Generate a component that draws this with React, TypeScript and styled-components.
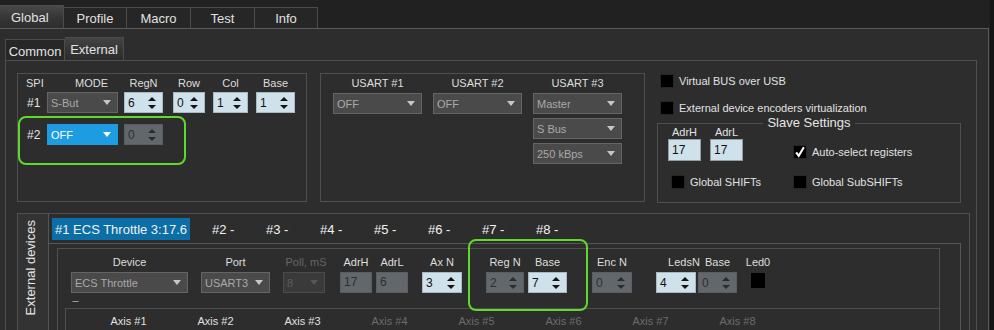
import React from "react";
import styled, { createGlobalStyle, css } from "styled-components";

const GlobalStyle = createGlobalStyle`
  html, body {
    margin: 0;
    padding: 0;
    background: #161616;
  }
  body {
    font-family: "Liberation Sans", Arial, sans-serif;
  }
  * {
    box-sizing: border-box;
  }
`;

const BORDER = "#4f4f4f";
const PANEL = "#2d2d2d";

const Root = styled.div`
  width: 994px;
  height: 330px;
  overflow: hidden;
  background: #161616;
`;

const Frame = styled.div`
  width: 990px;
  height: 330px;
  background: #212121;
`;

const TopTabs = styled.div`
  display: flex;
  align-items: flex-end;
  height: 28px;
`;

const Tab = styled.div<{ $w: number; $active?: boolean }>`
  width: ${({ $w }) => $w}px;
  height: ${({ $active }) => ($active ? 23 : 21)}px;
  border-top: 1px solid #4c4c4c;
  border-right: 1px solid #4c4c4c;
  display: flex;
  align-items: center;
  justify-content: ${({ $active }) => ($active ? "flex-start" : "center")};
  padding-left: ${({ $active }) => ($active ? 11 : 0)}px;
  font-size: 13px;
  color: #e2e2e2;
  background: ${({ $active }) => ($active ? "linear-gradient(#484848, #353535 55%, #2d2d2d)" : "#262626")};
`;

const MainPanel = styled.div`
  width: 989px;
  height: 302px;
  background: ${PANEL};
  border-top: 1px solid #5a5a5a;
  border-right: 1px solid #5a5a5a;
  padding: 8px 11px 0 5px;
`;

const SubTabs = styled.div`
  display: flex;
  align-items: flex-end;
  height: 23px;
`;

const SubTab = styled.div<{ $w: number; $active?: boolean; $first?: boolean }>`
  width: ${({ $w }) => $w}px;
  height: ${({ $active }) => ($active ? 23 : 21)}px;
  border-top: 1px solid #4c4c4c;
  border-right: 1px solid #4c4c4c;
  border-left: ${({ $first }) => ($first ? "1px solid #4c4c4c" : "none")};
  display: flex;
  align-items: center;
  justify-content: center;
  font-size: 13px;
  color: #e2e2e2;
  padding-top: ${({ $active }) => ($active ? 0 : 2)}px;
  background: ${({ $active }) => ($active ? "linear-gradient(#444, #333 60%, #2d2d2d)" : "#272727")};
`;

const SubPanel = styled.div`
  height: 280px;
  border: 1px solid ${BORDER};
  background: ${PANEL};
  padding: 12px 0 0 11px;
`;

const TopRow = styled.div`
  display: flex;
  align-items: flex-start;
  height: 130px;
`;

const GroupBox = styled.div<{ $w: number; $mr: number }>`
  position: relative;
  width: ${({ $w }) => $w}px;
  height: 129px;
  margin-right: ${({ $mr }) => $mr}px;
  border: 1px solid ${BORDER};
  padding-top: 2px;
`;

const Row = styled.div<{ $mt?: number; $h?: number }>`
  display: flex;
  align-items: center;
  height: ${({ $h }) => $h ?? 21}px;
  margin-top: ${({ $mt }) => $mt ?? 0}px;
`;

const Cell = styled.div<{ $w: number; $ml?: number; $pl?: number; $left?: boolean }>`
  width: ${({ $w }) => $w}px;
  margin-left: ${({ $ml }) => $ml ?? 0}px;
  padding-left: ${({ $pl }) => $pl ?? 0}px;
  text-align: ${({ $left }) => ($left ? "left" : "center")};
  font-size: 11px;
  color: #dedede;
  white-space: nowrap;
`;

const RowTag = styled.div`
  width: 29px;
  padding-left: 9px;
  font-size: 12px;
  color: #e4e4e4;
`;

const toneCss = {
  normal: css`
    background: #4a4a4a;
    border-color: #656565;
    color: #a9a9a9;
  `,
  blue: css`
    background: #1e9ce1;
    border-color: #1e9ce1;
    color: #ffffff;
  `,
  disabled: css`
    background: #3a3a3a;
    border-color: #4c4c4c;
    color: #5c5c5c;
  `,
};

type Tone = keyof typeof toneCss;

const ComboBox = styled.div<{ $w: number; $tone: Tone }>`
  width: ${({ $w }) => $w}px;
  height: 21px;
  flex: none;
  display: flex;
  align-items: center;
  justify-content: space-between;
  padding: 0 6px 0 3px;
  border: 1px solid;
  font-size: 11px;
  ${({ $tone }) => toneCss[$tone]}
`;

const DownArrow = styled.span<{ $color: string }>`
  width: 0;
  height: 0;
  border-left: 4.5px solid transparent;
  border-right: 4.5px solid transparent;
  border-top: 5px solid ${({ $color }) => $color};
`;

const arrowColor: Record<Tone, string> = { normal: "#c6c6c6", blue: "#ffffff", disabled: "#575757" };

const Combo = ({ w, value, tone = "normal" }: { w: number; value: string; tone?: Tone }) => (
  <ComboBox $w={w} $tone={tone}>
    <span>{value}</span>
    <DownArrow $color={arrowColor[tone]} />
  </ComboBox>
);

const SpinBox = styled.div<{ $w: number; $light: boolean }>`
  width: ${({ $w }) => $w}px;
  height: 21px;
  flex: none;
  display: flex;
  align-items: center;
  justify-content: space-between;
  padding: 0 6px 0 3px;
  font-size: 12px;
  background: ${({ $light }) => ($light ? "#cfe1ea" : "#62676b")};
  border: 1px solid ${({ $light }) => ($light ? "#a7b9c2" : "#5a5e62")};
  color: ${({ $light }) => ($light ? "#111" : "#2c3033")};
`;

const Arrows = styled.span<{ $color: string }>`
  display: flex;
  flex-direction: column;
  gap: 4px;
  &::before,
  &::after {
    content: "";
    width: 0;
    height: 0;
    border-left: 4px solid transparent;
    border-right: 4px solid transparent;
  }
  &::before {
    border-bottom: 4px solid ${({ $color }) => $color};
  }
  &::after {
    border-top: 4px solid ${({ $color }) => $color};
  }
`;

const Spinner = ({ w, value, light = true }: { w: number; value: string; light?: boolean }) => (
  <SpinBox $w={w} $light={light}>
    <span>{value}</span>
    <Arrows $color={light ? "#151515" : "#2a2d30"} />
  </SpinBox>
);

const Highlight = styled.div<{ $left: number; $top: number; $w: number; $h: number }>`
  position: absolute;
  left: ${({ $left }) => $left}px;
  top: ${({ $top }) => $top}px;
  width: ${({ $w }) => $w}px;
  height: ${({ $h }) => $h}px;
  border: 2px solid #5fd92a;
  border-radius: 8px;
  pointer-events: none;
`;

const UsartHead = styled.div`
  display: flex;
  gap: 11px;
  height: 14px;
  align-items: center;
  padding-left: 12px;
`;

const UsartGrid = styled.div`
  display: grid;
  grid-template-columns: repeat(3, 89px);
  grid-auto-rows: 21px;
  column-gap: 11px;
  row-gap: 4px;
  margin-top: 3px;
  padding-left: 12px;
`;

const GridSlot = styled.div<{ $col: number }>`
  grid-column: ${({ $col }) => $col};
`;

const RightCol = styled.div`
  width: 304px;
  display: flex;
  flex-direction: column;
  padding-top: 1px;
`;

const CheckRow = styled.div<{ $mt?: number; $ml?: number }>`
  display: flex;
  align-items: center;
  gap: 5px;
  height: 14px;
  margin-top: ${({ $mt }) => $mt ?? 0}px;
  padding-left: ${({ $ml }) => $ml ?? 3}px;
  font-size: 11px;
  color: #e2e2e2;
  white-space: nowrap;
`;

const CheckBox = styled.span`
  width: 14px;
  height: 14px;
  flex: none;
  background: #000;
  border: 1px solid #262626;
  display: flex;
  align-items: center;
  justify-content: center;
`;

const SlaveBox = styled.div`
  margin-top: 8px;
  height: 80px;
  border: 1px solid ${BORDER};
  display: flex;
  flex-direction: column;
`;

const Legend = styled.div`
  align-self: center;
  margin: -8px 0 -4px;
  padding: 0 4px;
  background: ${PANEL};
  font-size: 13px;
  line-height: 14px;
  color: #e6e6e6;
`;

const SlaveGrid = styled.div`
  display: grid;
  grid-template-columns: 125px 1fr;
  row-gap: 14px;
  padding-left: 10px;
`;

const AdrFields = styled.div`
  display: flex;
  gap: 9px;
`;

const AdrField = styled.div`
  display: flex;
  flex-direction: column;
  align-items: center;
  font-size: 11px;
  line-height: 13px;
  color: #e2e2e2;
`;

const AdrInput = styled.div`
  width: 33px;
  height: 22px;
  background: #cfe1ea;
  border: 1px solid #8f9da4;
  color: #111;
  font-size: 12px;
  line-height: 20px;
  padding-left: 3px;
  align-self: stretch;
`;

const AutoSelect = styled(CheckRow)`
  align-self: end;
  margin-bottom: 2px;
  padding-left: 0;
`;

const DevicesGroup = styled.div`
  display: flex;
  height: 130px;
  margin-top: 10px;
  margin-right: 6px;
  border: 1px solid ${BORDER};
`;

const VTab = styled.div`
  width: 31px;
  flex: none;
  background: #333;
  border-right: 1px solid #555;
  display: flex;
  flex-direction: column;
  align-items: center;
  justify-content: flex-start;
  padding: 6px 6px 0 0;
`;

const VText = styled.span`
  writing-mode: vertical-rl;
  transform: rotate(180deg);
  font-size: 13px;
  color: #e6e6e6;
  white-space: nowrap;
`;

const DevicesBody = styled.div`
  flex: 1;
  display: flex;
  flex-direction: column;
`;

const DevTabs = styled.div`
  flex: none;
  display: flex;
  align-items: center;
  height: 29px;
  padding: 1px 0 0 3px;
`;

const DevTab = styled.div<{ $active?: boolean }>`
  height: 22px;
  display: flex;
  align-items: center;
  font-size: 13px;
  color: #f2f2f2;
  white-space: nowrap;
  ${({ $active }) =>
    $active
      ? css`
          padding: 0 3px;
          background: #0c6ea6;
        `
      : css`
          width: 54px;
          padding-left: 22px;
        `}
`;

const DevPanel = styled.div`
  flex: none;
  margin-right: 8px;
  border-top: 1px solid #565656;
  border-right: 1px solid #565656;
  padding: 4px 20px 0 8px;
`;

const DeviceBox = styled.div`
  position: relative;
  height: 100px;
  border: 1px solid ${BORDER};
  border-bottom: none;
  padding-top: 7px;
`;

const FieldsRow = styled.div`
  display: flex;
  align-items: flex-start;
`;

const Field = styled.div<{ $w: number; $ml: number }>`
  width: ${({ $w }) => $w}px;
  margin-left: ${({ $ml }) => $ml}px;
  display: flex;
  flex-direction: column;
  align-items: center;
`;

const FieldLabel = styled.div<{ $dim?: boolean; $shift?: number }>`
  font-size: 11px;
  line-height: 13px;
  margin-bottom: 3px;
  white-space: nowrap;
  color: ${({ $dim }) => ($dim ? "#666" : "#dedede")};
  transform: translateX(${({ $shift }) => $shift ?? 0}px);
`;

const GrayBox = styled.div<{ $w: number }>`
  width: ${({ $w }) => $w}px;
  height: 21px;
  background: #62676b;
  border: 1px solid #5a5e62;
  color: #2c3033;
  font-size: 12px;
  line-height: 19px;
  padding-left: 3px;
`;

const Led = styled.div`
  width: 14px;
  height: 15px;
  margin-top: 1px;
  background: #000;
`;

const Dash = styled.div`
  height: 15px;
  display: flex;
  align-items: flex-end;
  padding: 0 0 2px 14px;
  font-size: 9px;
  line-height: 9px;
  color: #bdbdbd;
  letter-spacing: -1px;
`;

const AxisBox = styled.div`
  display: flex;
  margin-left: 7px;
  border-top: 1px solid ${BORDER};
  border-left: 1px solid ${BORDER};
  padding: 6px 0 0 19px;
  height: 40px;
`;

const AxisLabel = styled.div<{ $dim?: boolean }>`
  width: 87px;
  flex: none;
  text-align: center;
  font-size: 11px;
  line-height: 13px;
  color: ${({ $dim }) => ($dim ? "#6c6c6c" : "#e0e0e0")};
`;

const CheckMark = () => (
  <svg width="14" height="14" viewBox="0 0 14 14">
    <path d="M2.5 7.5 L5.5 11.5 L11.5 1.5" fill="none" stroke="#fff" strokeWidth="2.4" strokeLinejoin="miter" />
  </svg>
);

const topTabs = [
  { label: "Global", w: 64, active: true },
  { label: "Profile", w: 63 },
  { label: "Macro", w: 64 },
  { label: "Test", w: 64 },
  { label: "Info", w: 63 },
];

const spiCols = [
  { label: "MODE", w: 71, ml: 0, pl: 18 },
  { label: "RegN", w: 39, ml: 6 },
  { label: "Row", w: 32, ml: 10 },
  { label: "Col", w: 35, ml: 8 },
  { label: "Base", w: 39, ml: 8 },
];

const axes = ["Axis #1", "Axis #2", "Axis #3", "Axis #4", "Axis #5", "Axis #6", "Axis #7", "Axis #8"];

export default function App() {
  return (
    <Root>
      <GlobalStyle />
      <Frame>
        <TopTabs>
          {topTabs.map((t) => (
            <Tab key={t.label} $w={t.w} $active={t.active}>
              {t.label}
            </Tab>
          ))}
        </TopTabs>
        <MainPanel>
          <SubTabs>
            <SubTab $w={60} $first>
              Common
            </SubTab>
            <SubTab $w={59} $active>
              External
            </SubTab>
          </SubTabs>
          <SubPanel>
            <TopRow>
              {/* SPI */}
              <GroupBox $w={290} $mr={13}>
                <Row $h={14}>
                  <Cell $w={29} $pl={8} $left>
                    SPI
                  </Cell>
                  {spiCols.map((c) => (
                    <Cell key={c.label} $w={c.w} $ml={c.ml} $pl={c.pl}>
                      {c.label}
                    </Cell>
                  ))}
                </Row>
                <Row $mt={2}>
                  <RowTag>#1</RowTag>
                  <Combo w={71} value="S-But" />
                  <Cell $w={39} $ml={6}>
                    <Spinner w={39} value="6" />
                  </Cell>
                  <Cell $w={32} $ml={10}>
                    <Spinner w={32} value="0" />
                  </Cell>
                  <Cell $w={35} $ml={8}>
                    <Spinner w={35} value="1" />
                  </Cell>
                  <Cell $w={39} $ml={8}>
                    <Spinner w={39} value="1" />
                  </Cell>
                </Row>
                <Row $mt={11}>
                  <RowTag>#2</RowTag>
                  <Combo w={71} value="OFF" tone="blue" />
                  <Cell $w={39} $ml={6}>
                    <Spinner w={39} value="0" light={false} />
                  </Cell>
                </Row>
                <Highlight $left={0} $top={42} $w={168} $h={49} />
              </GroupBox>

              {/* USART */}
              <GroupBox $w={325} $mr={12}>
                <UsartHead>
                  <Cell $w={89}>USART #1</Cell>
                  <Cell $w={89}>USART #2</Cell>
                  <Cell $w={89}>USART #3</Cell>
                </UsartHead>
                <UsartGrid>
                  <Combo w={89} value="OFF" />
                  <Combo w={89} value="OFF" />
                  <Combo w={89} value="Master" />
                  <GridSlot $col={3}>
                    <Combo w={89} value="S Bus" />
                  </GridSlot>
                  <GridSlot $col={3}>
                    <Combo w={89} value="250 kBps" />
                  </GridSlot>
                </UsartGrid>
              </GroupBox>

              {/* Right side */}
              <RightCol>
                <CheckRow>
                  <CheckBox />
                  Virtual BUS over USB
                </CheckRow>
                <CheckRow $mt={13}>
                  <CheckBox />
                  External device encoders virtualization
                </CheckRow>
                <SlaveBox>
                  <Legend>Slave Settings</Legend>
                  <SlaveGrid>
                    <AdrFields>
                      <AdrField>
                        AdrH
                        <AdrInput>17</AdrInput>
                      </AdrField>
                      <AdrField>
                        AdrL
                        <AdrInput>17</AdrInput>
                      </AdrField>
                    </AdrFields>
                    <AutoSelect>
                      <CheckBox>
                        <CheckMark />
                      </CheckBox>
                      Auto-select registers
                    </AutoSelect>
                    <CheckRow $ml={3}>
                      <CheckBox />
                      Global SHIFTs
                    </CheckRow>
                    <CheckRow $ml={0}>
                      <CheckBox />
                      Global SubSHIFTs
                    </CheckRow>
                  </SlaveGrid>
                </SlaveBox>
              </RightCol>
            </TopRow>

            <DevicesGroup>
              <VTab>
                <VText>External devices</VText>
              </VTab>
              <DevicesBody>
                <DevTabs>
                  <DevTab $active>#1 ECS Throttle 3:17.6</DevTab>
                  {["#2 -", "#3 -", "#4 -", "#5 -", "#6 -", "#7 -", "#8 -"].map((t) => (
                    <DevTab key={t}>{t}</DevTab>
                  ))}
                </DevTabs>
                <DevPanel>
                  <DeviceBox>
                    <FieldsRow>
                      <Field $w={117} $ml={13}>
                        <FieldLabel>Device</FieldLabel>
                        <Combo w={117} value="ECS Throttle" />
                      </Field>
                      <Field $w={69} $ml={13}>
                        <FieldLabel>Port</FieldLabel>
                        <Combo w={69} value="USART3" />
                      </Field>
                      <Field $w={42} $ml={13}>
                        <FieldLabel $dim $shift={2}>
                          Poll, mS
                        </FieldLabel>
                        <Combo w={42} value="8" tone="disabled" />
                      </Field>
                      <Field $w={32} $ml={15}>
                        <FieldLabel>AdrH</FieldLabel>
                        <GrayBox $w={32}>17</GrayBox>
                      </Field>
                      <Field $w={32} $ml={4}>
                        <FieldLabel>AdrL</FieldLabel>
                        <GrayBox $w={32}>6</GrayBox>
                      </Field>
                      <Field $w={40} $ml={14}>
                        <FieldLabel>Ax N</FieldLabel>
                        <Spinner w={40} value="3" />
                      </Field>
                      <Field $w={38} $ml={24}>
                        <FieldLabel>Reg N</FieldLabel>
                        <Spinner w={38} value="2" light={false} />
                      </Field>
                      <Field $w={39} $ml={4}>
                        <FieldLabel>Base</FieldLabel>
                        <Spinner w={39} value="7" />
                      </Field>
                      <Field $w={40} $ml={25}>
                        <FieldLabel>Enc N</FieldLabel>
                        <Spinner w={40} value="0" light={false} />
                      </Field>
                      <Field $w={40} $ml={24}>
                        <FieldLabel $shift={8}>LedsN</FieldLabel>
                        <Spinner w={40} value="4" />
                      </Field>
                      <Field $w={39} $ml={2}>
                        <FieldLabel>Base</FieldLabel>
                        <Spinner w={39} value="0" light={false} />
                      </Field>
                      <Field $w={22} $ml={10}>
                        <FieldLabel>Led0</FieldLabel>
                        <Led />
                      </Field>
                    </FieldsRow>
                    <Dash>---</Dash>
                    <AxisBox>
                      {axes.map((a, i) => (
                        <AxisLabel key={a} $dim={i > 2}>
                          {a}
                        </AxisLabel>
                      ))}
                    </AxisBox>
                    <Highlight $left={410} $top={-10} $w={120} $h={72} />
                  </DeviceBox>
                </DevPanel>
              </DevicesBody>
            </DevicesGroup>
          </SubPanel>
        </MainPanel>
      </Frame>
    </Root>
  );
}
